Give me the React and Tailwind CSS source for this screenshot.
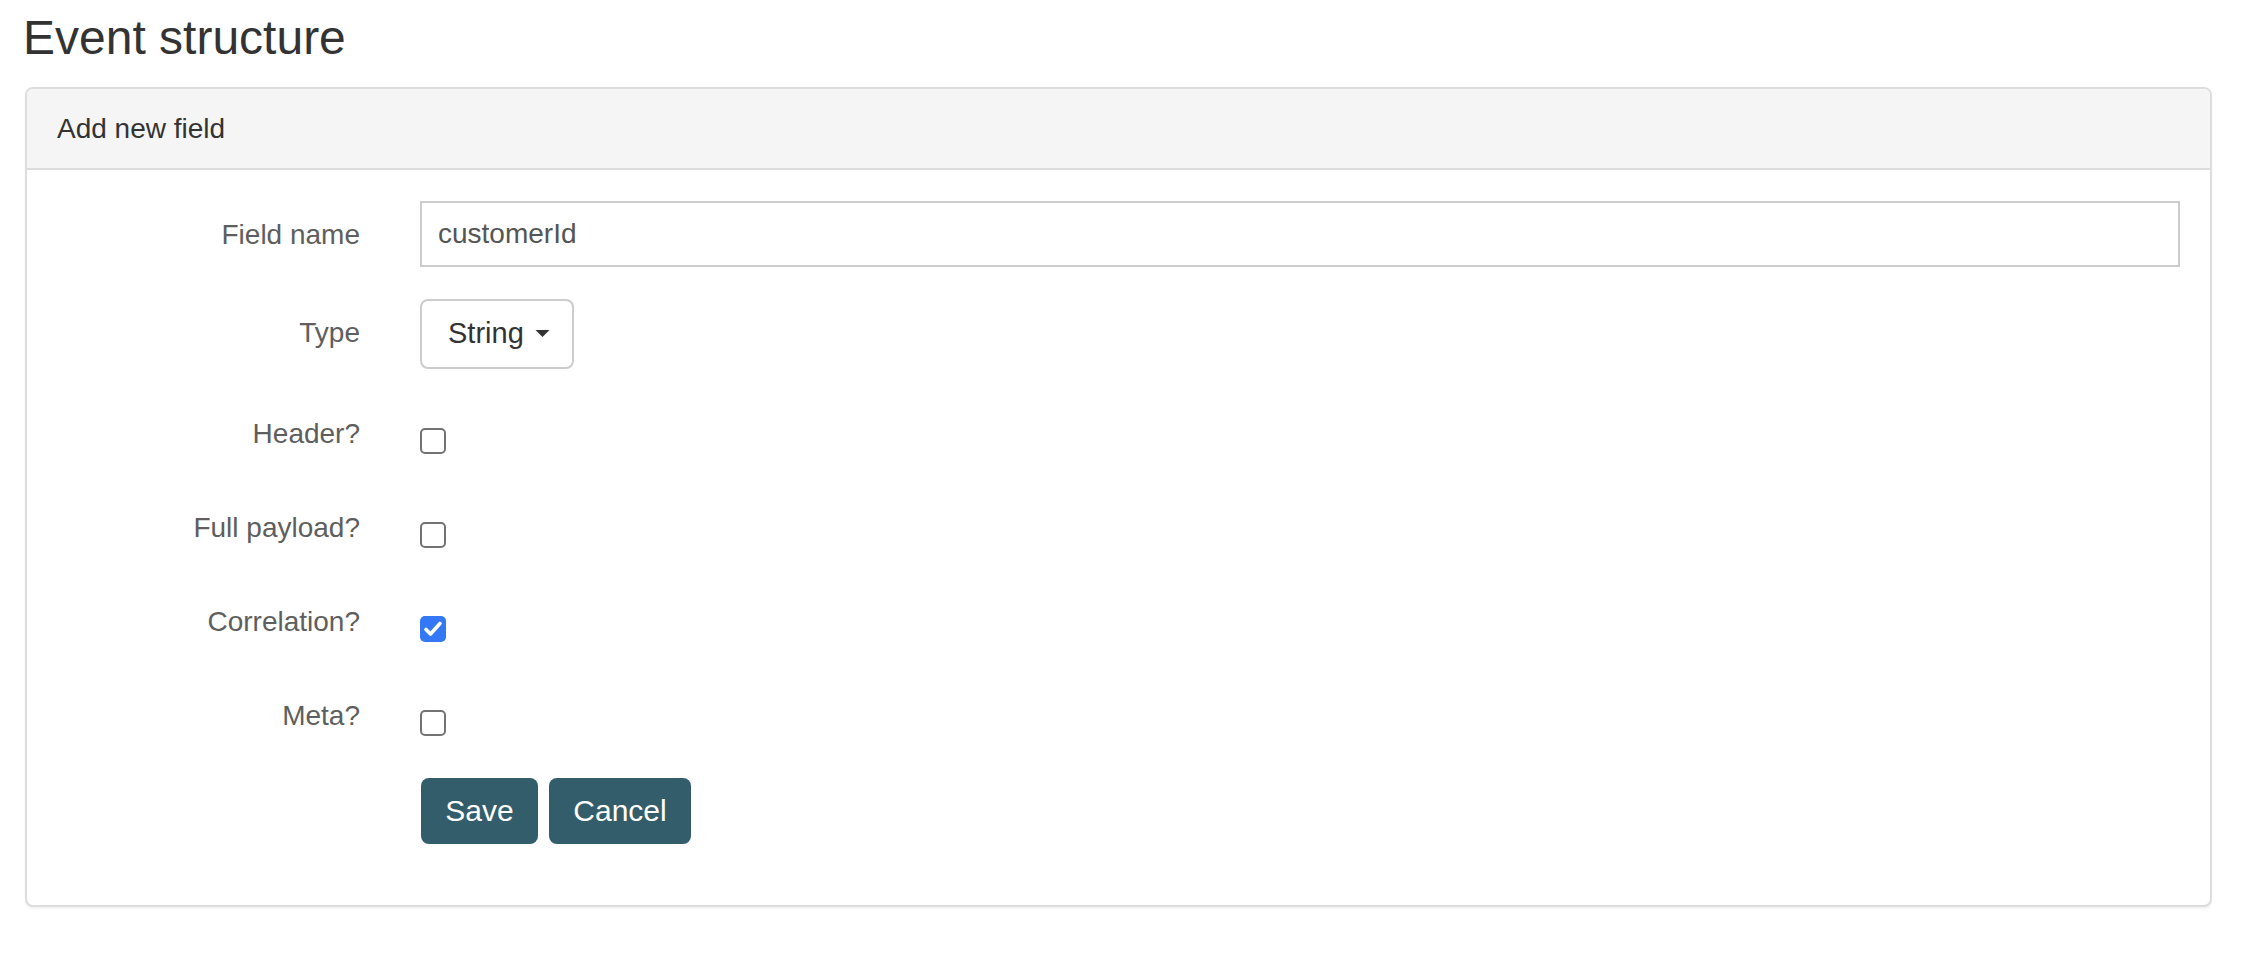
import { useState } from 'react'

const labelCls =
  'w-[303px] shrink-0 text-right text-[28px] leading-[40px] text-[#5e5e5e]'

function CheckRow({ label, checked, onToggle }) {
  return (
    <div className="flex h-[64px] gap-[60px]">
      <label className={`${labelCls} pt-[14px]`}>{label}</label>
      <div className="pt-[28px]">
        <button
          type="button"
          onClick={onToggle}
          className={`flex h-[26px] w-[26px] items-center justify-center rounded-[5px] ${
            checked
              ? 'bg-[#3478f6]'
              : 'border-2 border-[#737373] bg-white'
          }`}
        >
          {checked && (
            <svg viewBox="0 0 26 26" className="h-[26px] w-[26px]">
              <path
                d="M6 13.5l4.5 4.5L20 7.5"
                fill="none"
                stroke="#fff"
                strokeWidth="3.6"
                strokeLinecap="round"
                strokeLinejoin="round"
              />
            </svg>
          )}
        </button>
      </div>
    </div>
  )
}

export default function App() {
  const [name, setName] = useState('customerId')
  const [flags, setFlags] = useState({
    header: false,
    payload: false,
    correlation: true,
    meta: false,
  })

  const toggle = (key) => setFlags((prev) => ({ ...prev, [key]: !prev[key] }))

  return (
    <div className="min-h-screen bg-white pl-[25px] pr-[52px] font-['Liberation_Sans',Arial,sans-serif]">
      <h1 className="ml-[-2px] pt-[12px] text-[48px] leading-[1.1] font-normal text-[#333]">
        Event structure
      </h1>

      <section className="mt-[22px] rounded-[8px] border-2 border-[#ddd] bg-white shadow-[0_2px_2px_rgba(0,0,0,0.05)]">
        <header className="rounded-t-[6px] border-b-2 border-[#ddd] bg-[#f5f5f5] px-[30px] pt-[20px] pb-[19px] text-[28px] leading-[40px] text-[#333]">
          Add new field
        </header>

        <form className="flex flex-col px-[30px] pt-[31px] pb-[61px]">
          <div className="mb-[32px] flex gap-[60px]">
            <label className={`${labelCls} pt-[14px]`}>Field name</label>
            <input
              type="text"
              value={name}
              onChange={(event) => setName(event.target.value)}
              className="h-[66px] flex-1 border-2 border-[#ccc] bg-white px-[16px] text-[28px] text-[#555] outline-none"
            />
          </div>

          <div className="mb-[31px] flex gap-[60px]">
            <label className={`${labelCls} pt-[14px]`}>Type</label>
            <button
              type="button"
              className="flex h-[70px] w-[154px] items-center gap-[11px] rounded-[8px] border-2 border-[#ccc] bg-white pl-[26px] text-[29px] text-[#333]"
            >
              String
              <svg viewBox="0 0 16 8" className="h-[7px] w-[15px]">
                <path d="M0 0h16L8 8z" fill="#333" />
              </svg>
            </button>
          </div>

          <div className="mb-[30px]">
            <CheckRow label="Header?" checked={flags.header} onToggle={() => toggle('header')} />
          </div>
          <div className="mb-[30px]">
            <CheckRow label="Full payload?" checked={flags.payload} onToggle={() => toggle('payload')} />
          </div>
          <div className="mb-[30px]">
            <CheckRow
              label="Correlation?"
              checked={flags.correlation}
              onToggle={() => toggle('correlation')}
            />
          </div>
          <div className="mb-[32px]">
            <CheckRow label="Meta?" checked={flags.meta} onToggle={() => toggle('meta')} />
          </div>

          <div className="flex gap-[60px]">
            <div className="w-[303px] shrink-0" />
            <div className="ml-[1px] flex gap-[11px]">
              <button
                type="submit"
                onClick={(event) => event.preventDefault()}
                className="h-[66px] w-[117px] rounded-[8px] bg-[#335d6b] text-[30px] text-white"
              >
                Save
              </button>
              <button
                type="button"
                className="h-[66px] w-[142px] rounded-[8px] bg-[#335d6b] text-[30px] text-white"
              >
                Cancel
              </button>
            </div>
          </div>
        </form>
      </section>
    </div>
  )
}
